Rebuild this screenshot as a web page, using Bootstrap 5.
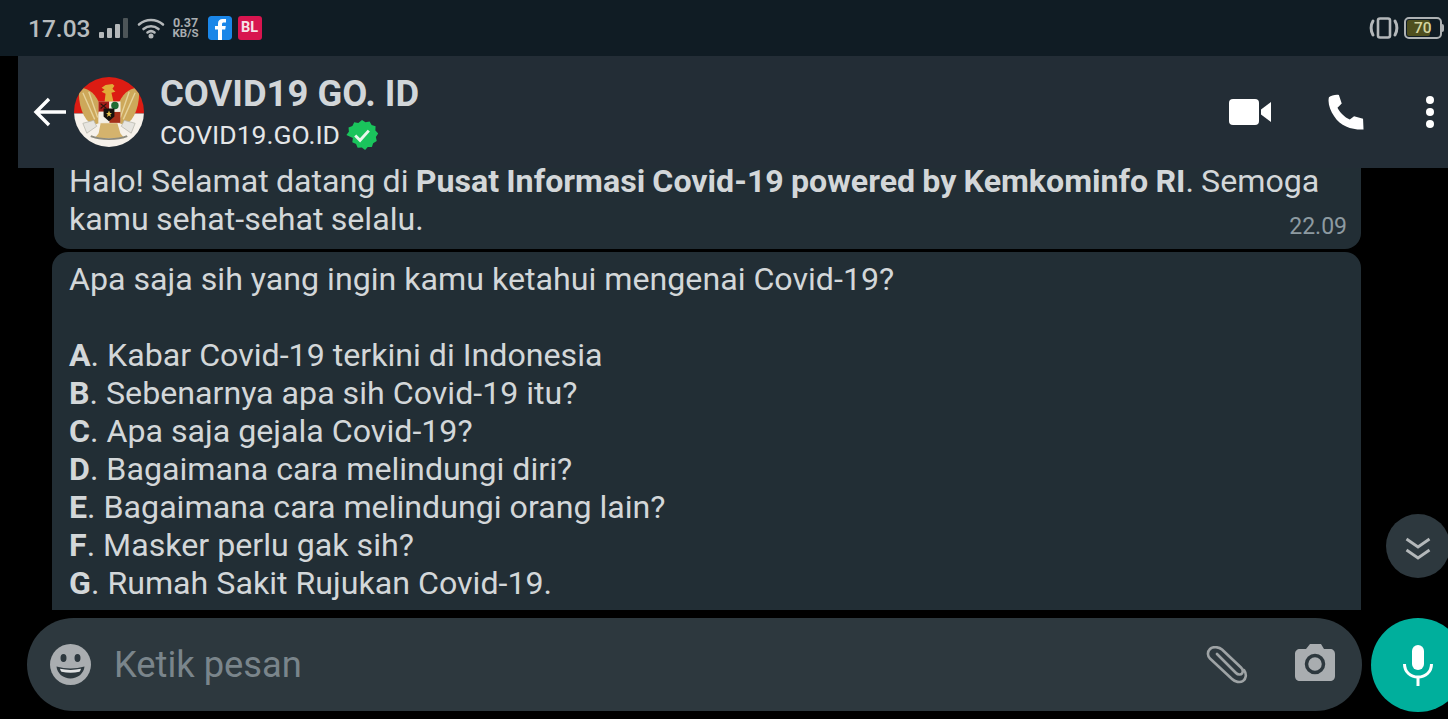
<!DOCTYPE html>
<html lang="id">
<head>
<meta charset="utf-8">
<title>COVID19 GO. ID</title>
<link href="https://cdn.jsdelivr.net/npm/bootstrap@5.3.0/dist/css/bootstrap.min.css" rel="stylesheet">
<style>
html,body{height:719px;overflow:hidden;background:#000;}
body{font-family:Roboto,"Liberation Sans",sans-serif;position:relative;color:#d3d7d9;}
.sbar{height:56px;background:#101c24;padding:0 6px 0 28px;}
.sclock{font-size:24.5px;line-height:1;font-weight:500;color:#b8bcbe;margin:2px 8px 0 0;}
.sspeed{font-size:12.5px;line-height:11px;font-weight:700;color:#a9adb0;text-align:center;margin:0 9px 0 8px;width:26px;}
.sspeed span{display:block;}
.sspeed .unit{font-size:11.5px;}
.appico{width:24px;height:24px;border-radius:3px;margin-right:6px;flex:none;}
.bl-tile{background:#d8154f;color:#f6e3e9;font-size:14.5px;line-height:1;}
.vibe{margin-right:5px;}
.battbox{width:38px;height:22px;border:2px solid #aeb2b4;border-radius:5px;padding:1px;position:relative;}
.battbox::after{content:"";position:absolute;right:-4px;top:5px;width:2px;height:8px;background:#aeb2b4;border-radius:0 2px 2px 0;}
.battfill{background:#4f4f1e;color:#d4d4a0;font-size:15.5px;font-weight:500;line-height:16px;height:16px;width:23px;border-radius:2px;padding-left:7px;white-space:nowrap;}
.hdr{height:112px;margin-left:18px;background:#232d36;position:relative;z-index:2;padding:0 10px 0 15px;}
.ava{margin:0 16px 0 7px;flex:none;}
.ttl{font-size:36.4px;line-height:40px;font-weight:700;color:#d2d6d9;margin-top:2px;}
.sub{font-size:26.5px;line-height:36px;color:#e4e6e8;margin-top:3px;gap:6px;}
.chatcol{height:448px;padding-right:87px;}
.bub{background:#222e35;font-size:32.17px;line-height:38px;color:#d3d7d9;}
.bubfirst{margin:-6px 0 3px 54px;padding:0 14px 11px 15px;border-radius:0 0 16px 16px;word-spacing:-.8px;}
.bubsecond{margin-left:52px;height:358px;padding:8px 18px 8px 17px;border-radius:16px 16px 0 0;}
.stamp{font-size:23px;color:#8d9aa1;margin-top:13px;line-height:28px;}
.blank{height:38px;}
.inbar{padding-top:8px;padding-left:27px;}
.inpill{width:1335px;height:93px;background:#2d383e;border-radius:47px;padding:0 27px 0 23px;flex:none;}
.phold{font-size:36.3px;color:#7a858b;margin:2px 0 0 23px;line-height:1;}
.micbtn{width:94px;height:94px;background:#00af9c;border-radius:50%;flex:none;margin-left:9px;}
.godown{position:absolute;left:1386px;top:514px;width:64px;height:64px;border-radius:50%;background:#2d383e;}
.chev{margin-top:5px;}
.phone-ico{margin:0 61px 0 57px;}
.dots-ico{margin-right:3px;}
.cam-ico{margin:-4px 0 0 47px;}
</style>
</head>
<body>
<div class="sbar d-flex align-items-center">
  <span class="sclock">17.03</span>
  <svg width="30" height="22" viewBox="0 0 30 22"><rect x="0" y="15" width="5" height="6" rx="1" fill="#b4b8ba"/><rect x="8" y="11" width="5" height="10" rx="1" fill="#b4b8ba"/><rect x="16" y="7" width="5" height="14" rx="1" fill="#b4b8ba"/><rect x="24" y="1" width="5" height="20" rx="1" fill="#4d5558"/></svg>
  <svg class="ms-2" width="28" height="22" viewBox="0 0 28 22" fill="none" stroke="#b4b8ba" stroke-width="2.600" stroke-linecap="round"><path d="M2 7.500C9 1.500 19 1.500 26 7.500"/><path d="M6.500 12C11 8.300 17 8.300 21.500 12"/><path d="M10.500 15.500C12.500 14 15.500 14 17.500 15.500"/><circle cx="14" cy="19" r="1.200" fill="#b4b8ba"/></svg>
  <div class="sspeed"><span>0.37</span><span class="unit">KB/S</span></div>
  <svg class="appico" viewBox="0 0 24 24"><rect width="24" height="24" rx="3" fill="#1a86e8"/><path d="M10 24V13.500H7V10h3V7.500C10 4.500 11.800 3 14.500 3H18v3.500h-2.200c-1.200 0-1.800.5-1.800 1.600V10h3.800l-.6 3.500H14V24z" fill="#fff"/></svg>
  <div class="appico d-flex align-items-center justify-content-center fw-bold bl-tile">BL</div>
  <div class="ms-auto d-flex align-items-center">
    <svg class="vibe" width="30" height="22" viewBox="0 0 30 22" fill="none" stroke="#b4b8ba" stroke-width="2.600"><rect x="9" y="1.500" width="12" height="19" rx="2"/><path d="M4 4C1.500 8 1.500 14 4 18M26 4c2.500 4 2.500 10 0 14" stroke-width="3" stroke-linecap="round"/></svg>
    <div class="battbox"><div class="battfill">70</div></div>
  </div>
</div>

<div class="hdr d-flex align-items-center">
  <svg class="flex-none" width="34" height="30" viewBox="0 0 34 30" fill="none" stroke="#fff" stroke-width="3.400"><path d="M33 15H3M16 2L3 15l13 13"/></svg>
  <svg class="ava" width="70" height="70" viewBox="0 0 71 71">
    <defs><clipPath id="cc"><circle cx="35.500" cy="35.500" r="35.500"/></clipPath></defs>
    <g clip-path="url(#cc)">
      <rect width="71" height="37" fill="#dc1c13"/><rect y="37" width="71" height="34" fill="#f6f1ea"/>
      <path d="M5 11c8 0 15 4 20 14v22l-6 2C9 43 4 28 5 11z" fill="#cda85a"/>
      <path d="M66 11c-8 0-15 4-20 14v22l6 2c10-6 15-21 14-38z" fill="#cda85a"/>
      <path d="M9 16l12 27M15 15l9 26M62 16L50 43M56 15l-9 26" stroke="#e6d29a" stroke-width="1.400" fill="none"/>
      <path d="M28 11l4-3 7-1 2 2-2 3 3 3-4 1 2 9h-9l1-8-4-2 3-2z" fill="#e0aa38"/>
      <rect x="25" y="25" width="22" height="22" fill="#e9dcc0"/>
      <rect x="25" y="25" width="10.500" height="10" fill="#a51d18"/><rect x="36" y="25" width="11" height="10" fill="#f3efe5"/>
      <rect x="25" y="35.500" width="10.500" height="11" fill="#f3efe5"/><rect x="36" y="35.500" width="11" height="11" fill="#a5301a"/>
      <circle cx="41.500" cy="29" r="3.800" fill="#1f6b34"/><path d="M27 27l6 5M33 27l-6 5" stroke="#2a1510" stroke-width="1.200"/>
      <path d="M30 32h11v8l-5.500 5-5.500-5z" fill="#15120e"/><path d="M35.500 34l1 2.500h2l-1.700 1.500.7 2.500-2-1.500-2 1.500.7-2.500-1.700-1.500h2z" fill="#e8c24a"/>
      <path d="M27 47h17l3 10 4 5H21l4-5z" fill="#d4b36d"/>
      <path d="M9 47l11-3 3 6-10 7zM62 47l-11-3-3 6 10 7z" fill="#e6e4df" stroke="#b9b7ad" stroke-width=".800"/>
      <path d="M17 60c10 4 27 4 37 0" stroke="#8c8a7e" stroke-width="2" fill="none"/>
    </g>
  </svg>
  <div>
    <div class="ttl">COVID19 GO. ID</div>
    <div class="sub d-flex align-items-center">COVID19.GO.ID
      <svg width="32" height="32" viewBox="0 0 33 33"><path d="M16.500 1l3.600 2.400 4.200-.9 2.100 3.700 4.100 1.300-.2 4.300 2.900 3.200-2.400 3.600.9 4.200-3.700 2.100-1.300 4.100-4.300-.2-2.700 3.200-3.400-2.600-4.300.3-1.600-4-3.900-1.800.6-4.300L.4 16.500l2.600-3.400-.4-4.300 4-1.500 1.900-3.900 4.200.7z" fill="#1ac45c"/><path d="M9.500 17l5 5 9-10" fill="none" stroke="#e8f7ec" stroke-width="3"/></svg>
    </div>
  </div>
  <div class="ms-auto d-flex align-items-center">
    <svg width="42" height="26" viewBox="0 0 42 26"><rect width="30" height="26" rx="4" fill="#fff"/><path d="M32 10.500L42 3v20L32 15.500z" fill="#fff"/></svg>
    <svg class="phone-ico" width="36" height="36" viewBox="0 0 38 38"><path d="M1 3.500C3 1.500 8 .5 11.500 1l3 9-4.500 4.500c2.500 5 7.500 10 13 12.500l4.500-3.500 9.500 2.500.5 11.500c-12 .5-24-3-31-14C2 17 -.5 9 1 3.500z" fill="#fff"/></svg>
    <svg class="dots-ico" width="10" height="34" viewBox="0 0 10 34" fill="#fff"><circle cx="5" cy="5" r="4"/><circle cx="5" cy="17" r="4"/><circle cx="5" cy="29" r="4"/></svg>
  </div>
</div>

<div class="chatcol">
  <div class="bub bubfirst">Halo! Selamat datang di <b>Pusat Informasi Covid-19 powered by Kemkominfo RI</b>. Semoga kamu sehat-sehat selalu.<span class="stamp float-end">22.09</span></div>
  <div class="bub bubsecond">
    <div>Apa saja sih yang ingin kamu ketahui mengenai Covid-19?</div>
    <div class="blank"></div>
    <div><b>A</b>. Kabar Covid-19 terkini di Indonesia</div>
    <div><b>B</b>. Sebenarnya apa sih Covid-19 itu?</div>
    <div><b>C</b>. Apa saja gejala Covid-19?</div>
    <div><b>D</b>. Bagaimana cara melindungi diri?</div>
    <div><b>E</b>. Bagaimana cara melindungi orang lain?</div>
    <div><b>F</b>. Masker perlu gak sih?</div>
    <div><b>G</b>. Rumah Sakit Rujukan Covid-19.</div>
  </div>
</div>

<div class="inbar d-flex">
  <div class="inpill d-flex align-items-center">
    <svg width="41" height="41" viewBox="0 0 41 41"><circle cx="20.500" cy="20.500" r="20.500" fill="#a9adb0"/><ellipse cx="13.500" cy="14" rx="3" ry="4" fill="#2d383e"/><ellipse cx="27.500" cy="14" rx="3" ry="4" fill="#2d383e"/><path d="M6.500 22.500c9 2.500 19 2.500 28 0-.5 7-7 12-14 12s-13.500-5-14-12z" fill="#2d383e"/><path d="M10 24.800c7 1.500 14 1.500 21 0-.5 1.500-1 2.500-1.500 3-6 1.200-12 1.200-18 0-.6-.6-1.200-1.500-1.500-3z" fill="#dfe1e2"/></svg>
    <span class="phold">Ketik pesan</span>
    <svg class="ms-auto" width="42" height="38" viewBox="0 0 42 38" fill="none" stroke="#9ea3a5" stroke-width="2.600" stroke-linecap="round" stroke-linejoin="round"><path d="M11 8L30 27c2 2 5 2 6 .5s1-4-1-6L16 3.500C13 1 7 0 4 3S1.500 10 4 12.500L26 33c3 3 8 4 11 2s4-7 1-11"/></svg>
    <svg class="cam-ico" width="40" height="37" viewBox="0 0 40 37"><path d="M5 5h6l4-5h11l3 5h6c3 0 5 2 5 5v22c0 3-2 5-5 5H5c-3 0-5-2-5-5V10c0-3 2-5 5-5z" fill="#a9adb0"/><circle cx="20" cy="20" r="8.500" fill="none" stroke="#2d383e" stroke-width="3.500"/></svg>
  </div>
  <div class="micbtn d-flex align-items-center justify-content-center">
    <svg width="30" height="41" viewBox="0 0 30 41"><rect x="9" y="0" width="12" height="25" rx="6" fill="#fff"/><path d="M1.500 19c0 8 6 13 13.500 13s13.500-5 13.500-13" fill="none" stroke="#fff" stroke-width="3"/><rect x="13.500" y="31" width="3" height="10" fill="#fff"/></svg>
  </div>
</div>

<div class="godown d-flex align-items-center justify-content-center">
  <svg class="chev" width="26" height="24" viewBox="0 0 26 24" fill="none" stroke="#b4b8ba" stroke-width="2.800"><path d="M1.500 2L13 10 24.500 2M1.500 13L13 21l11.500-8"/></svg>
</div>
</body>
</html>
